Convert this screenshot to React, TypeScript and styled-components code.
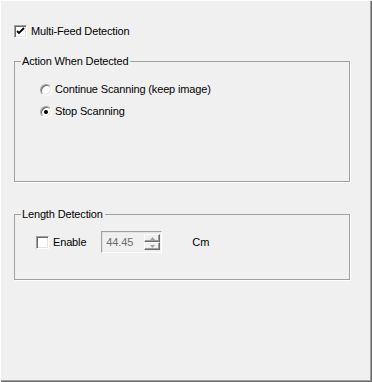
import styled, { createGlobalStyle } from "styled-components";

const Global = createGlobalStyle`
  html, body {
    margin: 0;
    padding: 0;
    background: #f0f0f0;
  }
  * {
    box-sizing: border-box;
  }
`;

const Panel = styled.div`
  width: 372px;
  height: 382px;
  background: #f0f0f0;
  padding: 24px 0 0 14px;
  font-family: "Liberation Sans", Arial, sans-serif;
  font-size: 11px;
  line-height: 13px;
  letter-spacing: -0.15px;
  color: #000;
  box-shadow: inset 1px 1px 0 #fff, inset -1px -1px 0 #696969,
    inset -2px -2px 0 #a0a0a0;
  display: flex;
  flex-direction: column;
`;

const Option = styled.label<{ $gap?: number }>`
  display: flex;
  align-items: center;
  gap: ${(p) => p.$gap ?? 4}px;
  height: 15px;
  white-space: nowrap;
`;

const Box = styled.span`
  width: 13px;
  height: 13px;
  background: #fff;
  border: 1px solid;
  border-color: #a0a0a0 #fff #fff #a0a0a0;
  box-shadow: inset 1px 1px 0 #696969, inset -1px -1px 0 #e3e3e3;
  display: flex;
  align-items: center;
  justify-content: center;
  flex: none;
`;

const Radio = styled.span<{ $on?: boolean }>`
  width: 12px;
  height: 12px;
  border-radius: 50%;
  background: #fff;
  border: 1px solid;
  border-color: #a0a0a0 #fff #fff #a0a0a0;
  box-shadow: inset 1px 1px 0 #696969, inset -1px -1px 0 #e3e3e3;
  display: flex;
  align-items: center;
  justify-content: center;
  flex: none;
  &::after {
    content: "";
    width: 4px;
    height: 4px;
    border-radius: 50%;
    background: ${(p) => (p.$on ? "#000" : "transparent")};
  }
`;

const Group = styled.fieldset<{ $top: number }>`
  width: 336px;
  margin: ${(p) => p.$top}px 0 0 0;
  padding: 0;
  border: 1px solid #a0a0a0;
  box-shadow: 1px 1px 0 #fff;
  min-inline-size: 0;
`;

const Legend = styled.legend`
  margin-left: 6px;
  padding: 0 2px 0 1px;
  line-height: 13px;
`;

const Stack = styled.div`
  height: 113px;
  padding: 14px 0 0 25px;
  display: flex;
  flex-direction: column;
  gap: 7px;
`;

const Row = styled.div`
  height: 58px;
  padding: 10px 0 0 21px;
  display: flex;
  align-items: flex-start;
`;

const EnableWrap = styled.div`
  height: 22px;
  display: flex;
  align-items: center;
`;

const Spin = styled.div`
  width: 61px;
  height: 22px;
  margin-left: 15px;
  border: 1px solid;
  border-color: #a0a0a0 #fff #fff #a0a0a0;
  box-shadow: inset 1px 1px 0 #e3e3e3;
  display: flex;
  align-items: center;
  padding: 2px 1px 2px 4px;
`;

const SpinValue = styled.span`
  flex: 1;
  color: #6d6d6d;
`;

const SpinButtons = styled.div`
  width: 16px;
  height: 100%;
  display: flex;
  flex-direction: column;
`;

const SpinBtn = styled.div`
  flex: 1;
  background: #f0f0f0;
  border: 1px solid;
  border-color: #fff #696969 #696969 #fff;
  box-shadow: inset -1px -1px 0 #a0a0a0;
  display: flex;
  align-items: center;
  justify-content: center;
`;

const Unit = styled.span`
  margin-left: 30px;
  line-height: 22px;
`;

function Check() {
  return (
    <svg width="9" height="9" viewBox="0 0 9 9">
      <path d="M1 4 L3 6 L8 1" fill="none" stroke="#000" strokeWidth="1.8" />
    </svg>
  );
}

function Arrow({ up }: { up?: boolean }) {
  return (
    <svg width="5" height="3" viewBox="0 0 5 3">
      <path d={up ? "M0 3 L2.5 0 L5 3 Z" : "M0 0 L5 0 L2.5 3 Z"} fill="#a0a0a0" />
    </svg>
  );
}

export default function App() {
  return (
    <Panel>
      <Global />
      <Option>
        <Box>
          <Check />
        </Box>
        Multi-Feed Detection
      </Option>

      <Group $top={16}>
        <Legend>Action When Detected</Legend>
        <Stack>
          <Option $gap={3}>
            <Radio />
            Continue Scanning (keep image)
          </Option>
          <Option $gap={3}>
            <Radio $on />
            Stop Scanning
          </Option>
        </Stack>
      </Group>

      <Group $top={26}>
        <Legend>Length Detection</Legend>
        <Row>
          <EnableWrap>
            <Option>
              <Box />
              Enable
            </Option>
          </EnableWrap>
          <Spin>
            <SpinValue>44.45</SpinValue>
            <SpinButtons>
              <SpinBtn>
                <Arrow up />
              </SpinBtn>
              <SpinBtn>
                <Arrow />
              </SpinBtn>
            </SpinButtons>
          </Spin>
          <Unit>Cm</Unit>
        </Row>
      </Group>
    </Panel>
  );
}
